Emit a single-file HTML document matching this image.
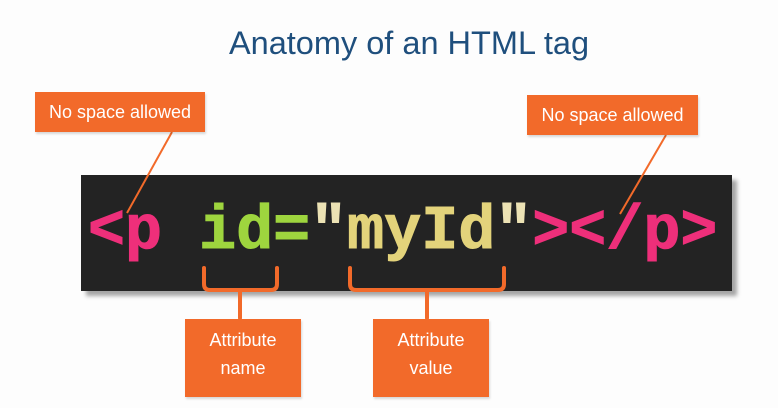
<!DOCTYPE html>
<html><head><meta charset="utf-8"><style>
*{margin:0;padding:0;box-sizing:border-box}
body{width:778px;height:408px;background:#fdfdfd;position:relative;overflow:hidden;font-family:"Liberation Sans",sans-serif}
.title{position:absolute;left:0;width:818px;top:25px;text-align:center;font-size:32.5px;color:#1f4f7d}
.code{position:absolute;left:81px;top:175px;width:651px;height:116px;background:#232323;box-shadow:5px 5px 4px rgba(0,0,0,0.35)}
.txt{position:absolute;left:88px;top:197px;font-family:"Liberation Mono",monospace;font-weight:bold;font-size:61.7px;line-height:70px;white-space:pre;color:#ee2f7a;-webkit-text-stroke:1px currentColor}
.g{color:#9ed53e}.y{color:#e3d37b}.q{color:#ece2b4}
.box{position:absolute;background:#f26a2a;color:#fff;font-size:18px;text-align:center;box-shadow:1px 2px 2px rgba(0,0,0,0.15)}
</style></head><body>
<div class="title">Anatomy of an HTML tag</div>
<div class="code"></div>
<div class="txt">&lt;p <span class="g">id=</span><span class="q">"</span><span class="y">myId</span><span class="q">"</span>&gt;&lt;/p&gt;</div>
<svg style="position:absolute;left:0;top:0" width="778" height="408">
<g stroke="#f26a2a" fill="none" stroke-width="2">
<line x1="172" y1="132" x2="127" y2="213"/>
<line x1="666" y1="135" x2="620" y2="214"/>
</g>
<g stroke="#f26a2a" fill="none" stroke-width="4" stroke-linecap="round">
<path d="M204 268 V284 Q204 290 210 290 H271 Q277 290 277 284 V268"/>
<path d="M240 290 V318"/>
<path d="M350 268 V284 Q350 290 356 290 H498 Q504 290 504 284 V268"/>
<path d="M427 290 V318"/>
</g>
</svg>
<div class="box" style="left:35px;top:92px;width:170px;height:40px;line-height:40px">No space allowed</div>
<div class="box" style="left:527px;top:95px;width:171px;height:40px;line-height:40px">No space allowed</div>
<div class="box" style="left:185px;top:319px;width:116px;height:78px;line-height:28px;padding-top:7px">Attribute<br>name</div>
<div class="box" style="left:373px;top:319px;width:116px;height:78px;line-height:28px;padding-top:7px">Attribute<br>value</div>
</body></html>
